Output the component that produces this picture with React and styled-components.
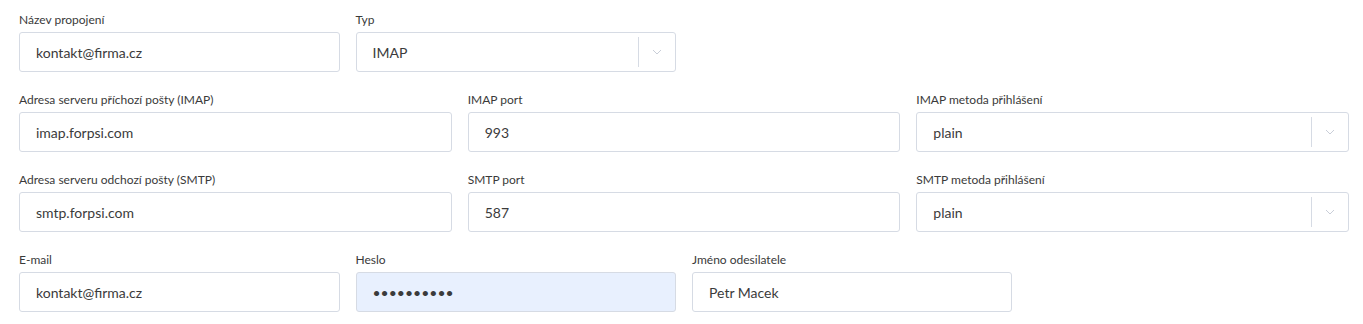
import React from "react";
import styled, { createGlobalStyle } from "styled-components";

const GlobalStyle = createGlobalStyle`
  body {
    margin: 0;
    background: #ffffff;
    font-family: "Lato", "Liberation Sans", sans-serif;
    color: #333;
  }
`;

const Form = styled.div`
  display: grid;
  grid-template-columns: repeat(12, 1fr);
  column-gap: 16px;
  row-gap: 20px;
  padding: 12px 14px 12px 19px;
`;

const Field = styled.div`
  grid-column: span ${(p) => p.span};
  display: flex;
  flex-direction: column;
`;

const Label = styled.label`
  font-size: 12px;
  line-height: 15px;
  color: #3a3a3a;
  margin-bottom: 5px;
`;

const Input = styled.input`
  box-sizing: border-box;
  height: 40px;
  width: 100%;
  border: 1px solid #d6dbe4;
  border-radius: 3px;
  padding: 0 16px;
  font-family: "Lato", "Liberation Sans", sans-serif;
  font-size: 14px;
  color: #3b3b3b;
  background: ${(p) => (p.$autofill ? "#e8f0fe" : "#ffffff")};
  outline: none;
`;

const SelectBox = styled.div`
  box-sizing: border-box;
  height: 40px;
  border: 1px solid #d6dbe4;
  border-radius: 3px;
  display: flex;
  align-items: center;
  background: #fff;
`;

const SelectValue = styled.div`
  flex: 1;
  padding-left: 16px;
  font-size: 14px;
  color: #3b3b3b;
`;

const Separator = styled.span`
  width: 1px;
  align-self: stretch;
  margin: 4px 0;
  background: #d6dbe4;
`;

const Arrow = styled.div`
  width: 36px;
  display: flex;
  align-items: center;
  justify-content: center;
`;

const Chevron = () => (
  <svg width="10" height="6" viewBox="0 0 10 6">
    <path d="M1 1 L5 5 L9 1" fill="none" stroke="#c9ced8" strokeWidth="1" />
  </svg>
);

const Select = ({ value }) => (
  <SelectBox>
    <SelectValue>{value}</SelectValue>
    <Separator />
    <Arrow>
      <Chevron />
    </Arrow>
  </SelectBox>
);

const fields = [
  { label: "Název propojení", span: 3, value: "kontakt@firma.cz" },
  { label: "Typ", span: 3, select: true, value: "IMAP" },
  { label: "", span: 6, empty: true },
  { label: "Adresa serveru příchozí pošty (IMAP)", span: 4, value: "imap.forpsi.com" },
  { label: "IMAP port", span: 4, value: "993" },
  { label: "IMAP metoda přihlášení", span: 4, select: true, value: "plain" },
  { label: "Adresa serveru odchozí pošty (SMTP)", span: 4, value: "smtp.forpsi.com" },
  { label: "SMTP port", span: 4, value: "587" },
  { label: "SMTP metoda přihlášení", span: 4, select: true, value: "plain" },
  { label: "E-mail", span: 3, value: "kontakt@firma.cz" },
  { label: "Heslo", span: 3, value: "heslo12345", password: true },
  { label: "Jméno odesilatele", span: 3, value: "Petr Macek" },
];

export default function App() {
  return (
    <>
      <GlobalStyle />
      <Form>
        {fields.map((f, i) => (
          <Field key={i} span={f.span}>
            {f.empty ? null : (
              <>
                <Label>{f.label}</Label>
                {f.select ? (
                  <Select value={f.value} />
                ) : f.password ? (
                  <Input type="password" defaultValue={f.value} $autofill />
                ) : (
                  <Input type="text" defaultValue={f.value} />
                )}
              </>
            )}
          </Field>
        ))}
      </Form>
    </>
  );
}
